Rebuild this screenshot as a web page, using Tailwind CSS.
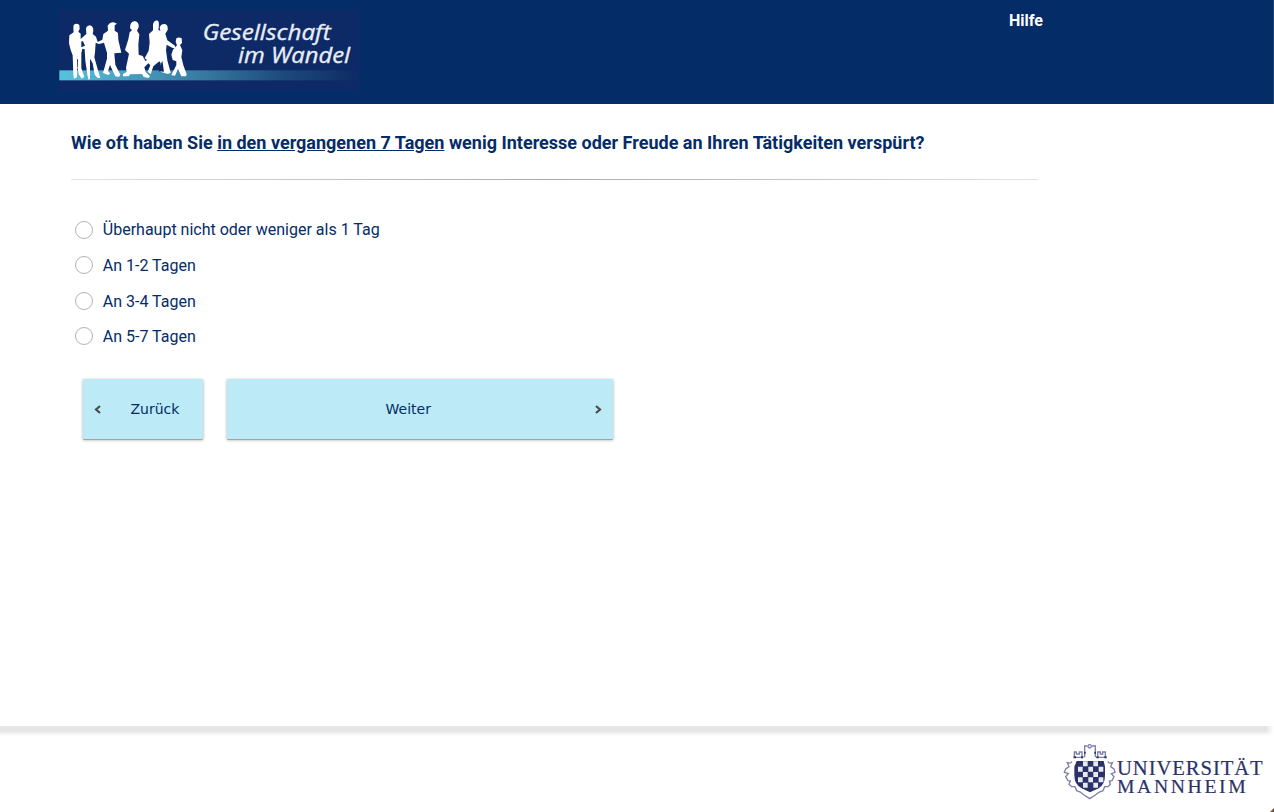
<!DOCTYPE html>
<html lang="de">
<head>
<meta charset="utf-8">
<title>Gesellschaft im Wandel</title>
<script src="https://cdn.jsdelivr.net/npm/@tailwindcss/browser@4"></script>
</head>
<body class="bg-white">
<div class="relative flex h-[812px] w-[1274px] flex-col overflow-hidden font-['Roboto',sans-serif] text-[#042c67]">
  <header class="flex h-[104px] shrink-0 items-start justify-between border-r border-[#1d4379] bg-[#042c67] pl-[59px] pr-[230px]">
    <svg class="mt-[10px] h-[81px] w-[300px]" viewBox="27 30 900 243">
      <defs>
        <linearGradient id="band" x1="0" x2="1"><stop offset="0" stop-color="#57c3dc"/><stop offset=".2" stop-color="#4ba3c4"/><stop offset=".45" stop-color="#3a7fa5"/><stop offset=".75" stop-color="#1d4a7c"/><stop offset="1" stop-color="#0d2b66"/></linearGradient>
      </defs>
      <rect x="27" y="30" width="900" height="243" fill="#0d2a66"/>
      <rect x="28" y="211" width="896" height="30" fill="url(#band)"/>
      <g fill="#fff">
        <path d="M71 75Q79 68 88 75L89 86L85 95L92 101L92 117L103 107L109 102L108 84Q111 76 120 76Q130 79 130 92L128 102L138 110L143 126L157 119L160 102L174 92L173 77Q180 66 191 67L201 71L194 76L194 92L204 99L205 120L214 158L193 160L196 194L211 224L207 231L196 229L184 204L180 195L174 213L181 221L174 225L159 219L171 176V158L162 128L147 132L137 128L135 157L133 172L143 208L151 234L143 234L134 224L128 190L120 176L120 236L116 240L112 224L106 182L104 148L97 146L94 160L94 205L103 230L95 236L86 223L82 196L81 232L72 236L70 224L68 166L62 150L57 130L58 106L71 97L70 85Z"/>
        <path d="M241 75Q245 62 256 64Q268 68 266 82L261 92L268 103L265 134L266 164L278 168L286 183L291 180L284 175L296 152L299 128L297 102L309 91L309 73Q313 58 324 62Q329 68 325 89L331 93L329 82Q333 71 345 72Q355 75 353 90L346 101L352 121L375 137L376 145L368 144L350 134L348 151L352 181L362 218L354 222L331 215L332 190L328 184L310 199L302 223L293 215L301 196L295 190L283 202L287 216L300 229L295 234L281 231L276 222L240 223L236 229L219 229V222L230 216L228 203L237 161L225 150L235 118L239 97L246 91L240 84Z"/>
        <path d="M379 115Q386 110 395 115L396 129L390 135L397 151L394 171L400 196L410 223L408 229L394 229L384 207L375 227L364 226L367 218L379 196L379 184L368 180L364 164L369 149L381 136L377 126Z"/>
      </g>
      <g fill="#0d2a66">
        <path d="M94 124L99 124L105 137L94 142ZM337 182L329 200L326 214L342 215Z"/>
        <path d="M81 178L84 178L83 201L81 201Z"/>
      </g>
      <g fill="#e9eef6" stroke="#e9eef6" stroke-width="1" font-family="Open Sans, sans-serif" font-style="italic" font-size="64">
        <text x="458" y="121" textLength="384" lengthAdjust="spacingAndGlyphs">Gesellschaft</text>
        <text x="564" y="190" textLength="336" lengthAdjust="spacingAndGlyphs">im Wandel</text>
      </g>
    </svg>
    <a class="mt-[9px] text-base leading-6 font-bold text-white">Hilfe</a>
  </header>

  <main class="h-[622px] shrink-0 pl-[71px]">
    <h1 class="pt-[27px] text-[18px] leading-6 font-bold tracking-[0.004px] whitespace-nowrap">Wie oft haben Sie <span class="underline">in den vergangenen 7 Tagen</span> wenig Interesse oder Freude an Ihren Tätigkeiten verspürt?</h1>
    <div class="mt-6 h-px w-[967px] bg-linear-to-r from-[#e3e3e3] via-[#aaaaaa] to-[#e3e3e3]"></div>
    <div class="mt-[32px] flex flex-col pl-1 text-base">
      <label class="flex h-[36px] items-center gap-[9.8px]"><span class="size-[18px] rounded-full border border-[#b4b4b4]"></span><span>Überhaupt nicht oder weniger als 1 Tag</span></label>
      <label class="flex h-[34px] items-center gap-[9.8px]"><span class="size-[18px] rounded-full border border-[#b4b4b4]"></span><span class="pt-0.5">An 1-2 Tagen</span></label>
      <label class="flex h-[38px] items-center gap-[9.8px]"><span class="size-[18px] rounded-full border border-[#b4b4b4]"></span><span class="pt-0.5">An 3-4 Tagen</span></label>
      <label class="flex h-[32px] items-center gap-[9.8px]"><span class="size-[18px] rounded-full border border-[#b4b4b4]"></span><span class="pt-0.5">An 5-7 Tagen</span></label>
    </div>
    <div class="mt-[27px] flex gap-6 pl-3 font-['DejaVu_Sans',sans-serif] text-[14px]">
      <button class="flex h-[60px] w-[120px] items-center bg-[#bceaf7] pl-[11px] shadow-[0_1px_0_rgba(0,0,0,0.18),0_1px_3px_rgba(0,0,0,0.35)]">
        <svg class="h-[10px] w-[8px]" viewBox="0 0 8 10" fill="none" stroke="#4b4b4b" stroke-width="2.2"><path d="M6 2L2 5.5L6 9"/></svg>
        <span class="ml-[28.5px] pt-px">Zurück</span>
      </button>
      <button class="flex h-[60px] w-[386px] items-center justify-between bg-[#bceaf7] pl-[158.5px] pr-[11px] shadow-[0_1px_0_rgba(0,0,0,0.18),0_1px_3px_rgba(0,0,0,0.35)]">
        <span class="pt-px">Weiter</span>
        <svg class="h-[10px] w-[8px]" viewBox="0 0 8 10" fill="none" stroke="#4b4b4b" stroke-width="2.2"><path d="M2 2L6 5.5L2 9"/></svg>
      </button>
    </div>
  </main>

  <footer class="flex grow flex-col">
    <div class="flex h-[10px]">
      <div class="grow bg-linear-to-b from-[#e5e5e5] from-50% to-white"></div>
      <div class="w-[8px] bg-linear-to-b from-[#e5e5e5] from-50% to-white mask-r-from-0% mask-r-to-100%"></div>
    </div>
    <div class="flex justify-end pr-[2px]">
      <svg class="h-[70px] w-[216px]" viewBox="0 0 648 210">
        <g fill="none" stroke="#7b80a6" stroke-width="4">
          <path d="M55 64V46M53 48H61V54H70V48H78V64M53 64H81M122 64H150M125 64V48H133V54H140V48H148V64M86 64V30H94M108 30H118V64"/>
          <circle cx="101" cy="31" r="5"/>
          <path d="M48 77Q43 84 34 80L39 92L29 99L25 109L37 113L29 122L36 134L43 135L39 145L47 152L57 152L62 164L73 168L84 177L101 188L118 177L130 168L141 164L146 152L156 152L163 145L160 135L168 134L174 122L166 113L177 109L174 99L164 92L169 80Q160 84 155 77"/>
        </g>
        <g fill="#2b3269">
          <path d="M53 61H60V67H53ZM75 61H82V67H75ZM121 61H128V67H121ZM145 61H152V67H145ZM84 47H89V53H84ZM115 47H120V53H115Z"/>
          <path d="M62 75H143L147 92V118Q147 146 128 157L102 169L77 157Q55 146 55 118V92Z"/>
        </g>
        <path fill="#e8eaf1" d="M81 76H95V91H81ZM112 76H126V91H112ZM66 92H80V107H66ZM97 92H111V107H97ZM128 92H142V107H128ZM81 108H95V123H81ZM112 108H126V123H112ZM66 124H80V139H66ZM97 124H111V139H97ZM128 124H142V139H128ZM81 140H95V155H81ZM112 140H126V155H112Z"/>
        <g fill="#2b3269" stroke="#2b3269" stroke-width="0.6" font-family="Liberation Serif, serif" font-size="62">
          <text x="183" y="117" textLength="437" lengthAdjust="spacing">UNIVERSITÄT</text>
          <text x="183" y="170" font-size="59" textLength="386" lengthAdjust="spacing">MANNHEIM</text>
        </g>
      </svg>
    </div>
  </footer>
  <svg class="absolute right-0 bottom-0 size-1" viewBox="0 0 4 4"><path fill="#7a5230" d="M4 0V4H0Z"/></svg>
</div>
</body>
</html>
